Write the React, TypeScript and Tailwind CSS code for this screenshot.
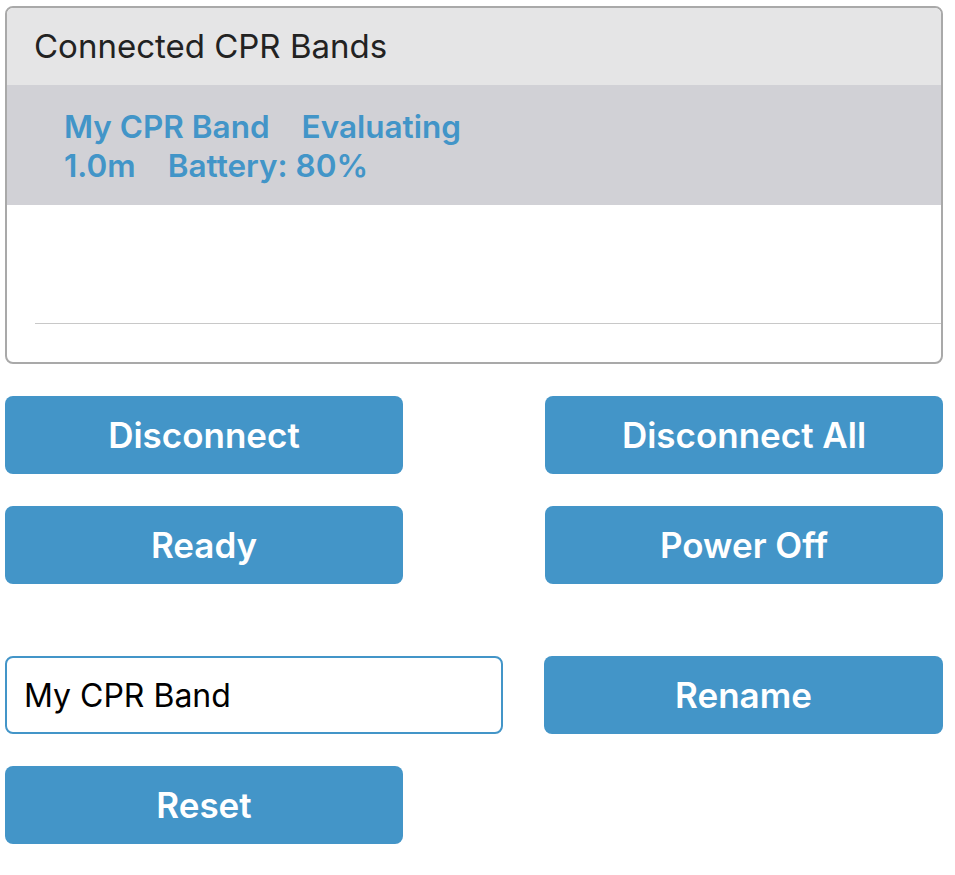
export default function App() {
  const btn =
    "h-[78px] rounded-lg bg-[#4395c8] text-white text-[35px] font-semibold flex items-center justify-center";
  return (
    <div className="w-[955px] h-[875px] bg-white pt-[6px] pl-[5px] pr-[12px] font-['Inter',sans-serif]">
      <div className="h-[358px] rounded-lg border-2 border-[#a9a9a9] overflow-hidden flex flex-col">
        <div className="h-[77px] bg-[#e5e5e6] flex items-center pl-[27px] text-[33px] text-[#222222]">
          Connected CPR Bands
        </div>
        <div className="h-[120px] bg-[#d1d1d6] pl-[57px] pt-[22px] text-[31.5px] font-semibold text-[#4295c8] leading-[39px]">
          <div className="flex gap-[32px]">
            <span>My CPR Band</span>
            <span>Evaluating</span>
          </div>
          <div className="flex gap-[32px]">
            <span>1.0m</span>
            <span>Battery: 80%</span>
          </div>
        </div>
        <div className="flex-1 flex flex-col">
          <div className="h-[118px]" />
          <div className="ml-[28px] border-t border-[#c8c8c8]" />
        </div>
      </div>

      <div className="mt-[32px] grid grid-cols-[398px_398px] justify-between gap-y-[32px]">
        <button className={btn}>Disconnect</button>
        <button className={btn}>Disconnect All</button>
        <button className={btn}>Ready</button>
        <button className={btn}>Power Off</button>
      </div>

      <div className="mt-[72px] flex justify-between">
        <input
          className="w-[498px] h-[78px] rounded-lg border-2 border-[#4395c8] px-[17px] text-[32px] text-black outline-none"
          defaultValue="My CPR Band"
        />
        <button className={btn + " w-[399px]"}>Rename</button>
      </div>
      <div className="mt-[32px]">
        <button className={btn + " w-[398px]"}>Reset</button>
      </div>
    </div>
  );
}
